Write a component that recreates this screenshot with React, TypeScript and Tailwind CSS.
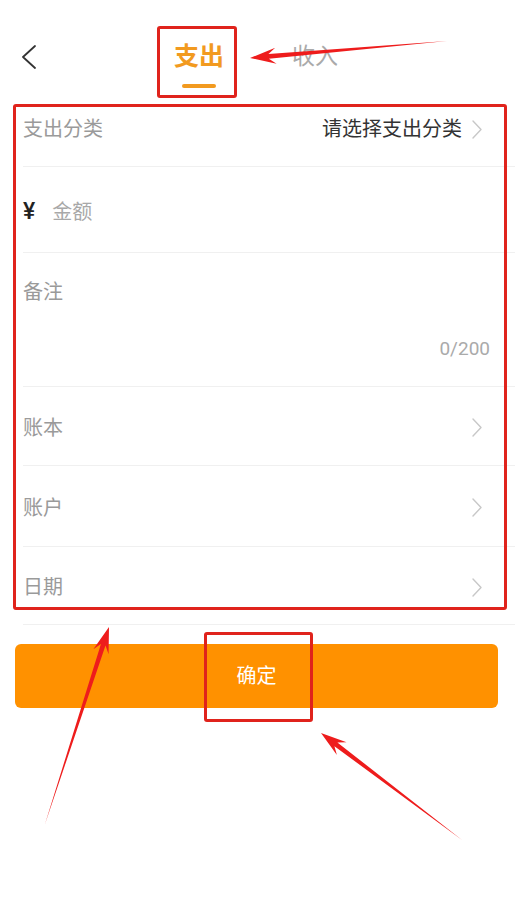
import React from "react";

type Pt = [number, number];

// tapered annotation arrow, tail thin, head filled
function arrowPoints(tail: Pt, tip: Pt, head = 26, wing = 8, shaft = 2.4) {
  const dx = tip[0] - tail[0];
  const dy = tip[1] - tail[1];
  const len = Math.hypot(dx, dy);
  const ux = dx / len;
  const uy = dy / len;
  const nx = -uy;
  const ny = ux;
  const wb: Pt = [tip[0] - ux * head, tip[1] - uy * head];
  const nb: Pt = [tip[0] - ux * head * 0.72, tip[1] - uy * head * 0.72];
  const pts: Pt[] = [
    tail,
    [nb[0] + nx * shaft, nb[1] + ny * shaft],
    [wb[0] + nx * wing, wb[1] + ny * wing],
    tip,
    [wb[0] - nx * wing, wb[1] - ny * wing],
    [nb[0] - nx * shaft, nb[1] - ny * shaft],
  ];
  return pts.map((p) => p.join(",")).join(" ");
}

function Chevron() {
  return (
    <svg width="10" height="19" viewBox="0 0 10 19" className="shrink-0">
      <polyline points="1,1 9,9.5 1,18" fill="none" stroke="#c8c8c8" strokeWidth="1.4" strokeLinejoin="round" strokeLinecap="round" />
    </svg>
  );
}

function PickRow({ label, value, h }: { label: string; value?: string; h: string }) {
  return (
    <div className={`ml-[23px] pr-[33px] pt-[3px] flex items-center border-b border-[#f0f0f0] ${h}`}>
      <span className="text-[20px] text-[#9a9a9a] leading-none">{label}</span>
      <div className="ml-auto flex items-center gap-[10px]">
        {value && <span className="text-[20px] text-[#333] leading-none">{value}</span>}
        <Chevron />
      </div>
    </div>
  );
}

export default function App() {
  return (
    <div className="relative w-[515px] h-[901px] overflow-hidden bg-white font-['Roboto','Noto_Sans_CJK_SC',sans-serif]">
      <header className="h-[89px] flex items-start pt-[44px] pl-[22px]">
        <div className="h-[25px] flex items-center">
          <svg width="14" height="24" viewBox="0 0 14 24">
            <polyline points="13,1 1,12 13,23" fill="none" stroke="#333" strokeWidth="1.8" strokeLinejoin="round" strokeLinecap="round" />
          </svg>
        </div>
        <div className="ml-[138px] flex items-start gap-[68px]">
          <div className="flex flex-col items-center">
            <span className="text-[25px] leading-[25px] font-bold text-[#f29a1f]">支出</span>
            <span className="mt-[15px] w-[34px] h-[4px] rounded-full bg-[#f29a1f]" />
          </div>
          <span className="text-[23px] leading-[25px] text-[#aaa]">收入</span>
        </div>
      </header>

      <PickRow label="支出分类" value="请选择支出分类" h="h-[78px]" />

      <div className="ml-[23px] h-[86px] pt-[4px] flex items-center border-b border-[#f0f0f0]">
        <span className="text-[23px] font-medium text-[#222] leading-none">¥</span>
        <span className="ml-[17px] text-[20px] text-[#a8a8a8] leading-none">金额</span>
      </div>

      <div className="ml-[23px] h-[134px] flex flex-col border-b border-[#f0f0f0] pr-[25px]">
        <span className="mt-[29px] text-[20px] text-[#9a9a9a] leading-[20px]">备注</span>
        <span className="mt-auto mb-[27px] self-end text-[19px] text-[#aaa] leading-[20px]">0/200</span>
      </div>

      <PickRow label="账本" h="h-[79px]" />
      <PickRow label="账户" h="h-[81px]" />
      <PickRow label="日期" h="h-[78px]" />

      <button className="mt-[19px] ml-[15px] w-[483px] h-[64px] rounded-[6px] bg-[#ff9100] flex items-center justify-center text-white text-[20px]">
        确定
      </button>

      {/* annotation overlays */}
      <div className="absolute left-[157px] top-[26px] w-[80px] h-[72px] border-[3px] border-[#e0231c] rounded-[3px]" />
      <div className="absolute left-[13px] top-[104px] w-[494px] h-[506px] border-[3px] border-[#e0231c] rounded-[3px]" />
      <div className="absolute left-[204px] top-[632px] w-[109px] h-[90px] border-[3px] border-[#e0231c] rounded-[3px]" />
      <svg className="absolute inset-0 pointer-events-none" width="515" height="901">
        <polygon points={arrowPoints([447, 41], [250, 58])} fill="#ee1c1c" />
        <polygon points={arrowPoints([45, 824], [109, 627])} fill="#ee1c1c" />
        <polygon points={arrowPoints([462, 840], [321, 733])} fill="#ee1c1c" />
      </svg>
    </div>
  );
}
